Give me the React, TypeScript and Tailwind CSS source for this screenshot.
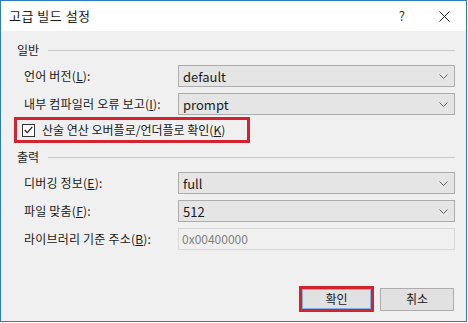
const font = { fontFamily: '"Noto Sans CJK KR", "Noto Sans", sans-serif' };

function Chevron() {
  return (
    <svg width="9" height="5" viewBox="0 0 9 5" fill="none" stroke="#606060" strokeWidth="1">
      <path d="M0.5 0.5 L4.5 4.5 L8.5 0.5" />
    </svg>
  );
}

function Select({ value }: { value: string }) {
  return (
    <div className="w-[277px] h-[22px] border border-[#acacac] bg-[#e5e5e5] flex items-center justify-between pl-[4px] pr-[6px]">
      <span className="text-[13px] text-[#1a1a1a] leading-none">{value}</span>
      <Chevron />
    </div>
  );
}

function Row({ label, mnemonic, children }: { label: string; mnemonic: string; children: React.ReactNode }) {
  return (
    <div className="flex items-center h-[22px]">
      <div className="w-[162px] pl-[8px] text-[12px] text-[#1a1a1a] leading-none tracking-[0.2px]">
        {label}(<span className="underline">{mnemonic}</span>):
      </div>
      {children}
    </div>
  );
}

function GroupHeader({ title }: { title: string }) {
  return (
    <div className="flex items-center h-[14px]">
      <span className="text-[12px] text-[#1a1a1a] leading-none pl-[1px]">{title}</span>
      <div className="flex-1 ml-[9px] h-px bg-[#c8c8c8]" />
    </div>
  );
}

export default function App() {
  return (
    <div className="bg-white w-[468px] h-[323px]" style={font}>
      <div className="w-[467px] h-[322px] border border-[#2b7cc0] bg-[#f0f0f0] flex flex-col">
        <div className="h-[30px] bg-white flex items-center justify-between pl-[8px] pr-[16px]">
          <span className="text-[13px] text-[#1a1a1a] tracking-[0.5px]">고급 빌드 설정</span>
          <div className="flex items-center gap-[34px]">
            <span className="text-[13px] text-[#333]">?</span>
            <svg width="11" height="11" viewBox="0 0 11 11" stroke="#222" strokeWidth="1">
              <path d="M0.5 0.5 L10.5 10.5 M10.5 0.5 L0.5 10.5" />
            </svg>
          </div>
        </div>

        <div className="flex flex-col pl-[15px] pr-[11px] pt-[12px]">
          <GroupHeader title="일반" />
          <div className="flex flex-col gap-[6px] mt-[8px]">
            <Row label="언어 버전" mnemonic="L">
              <Select value="default" />
            </Row>
            <Row label="내부 컴파일러 오류 보고" mnemonic="I">
              <Select value="prompt" />
            </Row>
          </div>

          <div className="mt-[2px] -ml-[2px] w-[236px] h-[26px] border-[3px] border-[#d2232f] flex items-center pl-[5px]">
            <div className="w-[13px] h-[13px] border border-[#333] bg-white flex items-center justify-center">
              <svg width="9" height="8" viewBox="0 0 9 8" fill="none" stroke="#222" strokeWidth="1.3">
                <path d="M0.8 4 L3.3 6.6 L8.3 0.8" />
              </svg>
            </div>
            <span className="ml-[7px] text-[12px] text-[#1a1a1a] leading-none">
              산술 연산 오버플로/언더플로 확인(<span className="underline">K</span>)
            </span>
          </div>

          <div className="mt-[7px]">
            <GroupHeader title="출력" />
          </div>
          <div className="flex flex-col gap-[6px] mt-[8px]">
            <Row label="디버깅 정보" mnemonic="E">
              <Select value="full" />
            </Row>
            <Row label="파일 맞춤" mnemonic="F">
              <Select value="512" />
            </Row>
            <Row label="라이브러리 기준 주소" mnemonic="B">
              <div className="w-[277px] h-[22px] border border-[#d9d9d9] bg-[#f0f0f0] flex items-center pl-[3px]">
                <span className="text-[12px] text-[#808080] leading-none">0x00400000</span>
              </div>
            </Row>
          </div>

          <div className="flex justify-end items-center gap-[6px] mt-[36px] pr-[1px]">
            <div className="w-[75px] h-[26px] border-[3px] border-[#d2232f] flex">
              <button className="flex-1 border border-[#7eb4ea] bg-[#e1e1e1] text-[12px] text-[#1a1a1a] leading-none">
                확인
              </button>
            </div>
            <button className="w-[74px] h-[23px] border border-[#adadad] bg-[#e1e1e1] text-[12px] text-[#1a1a1a] leading-none">
              취소
            </button>
          </div>
        </div>
      </div>
    </div>
  );
}
